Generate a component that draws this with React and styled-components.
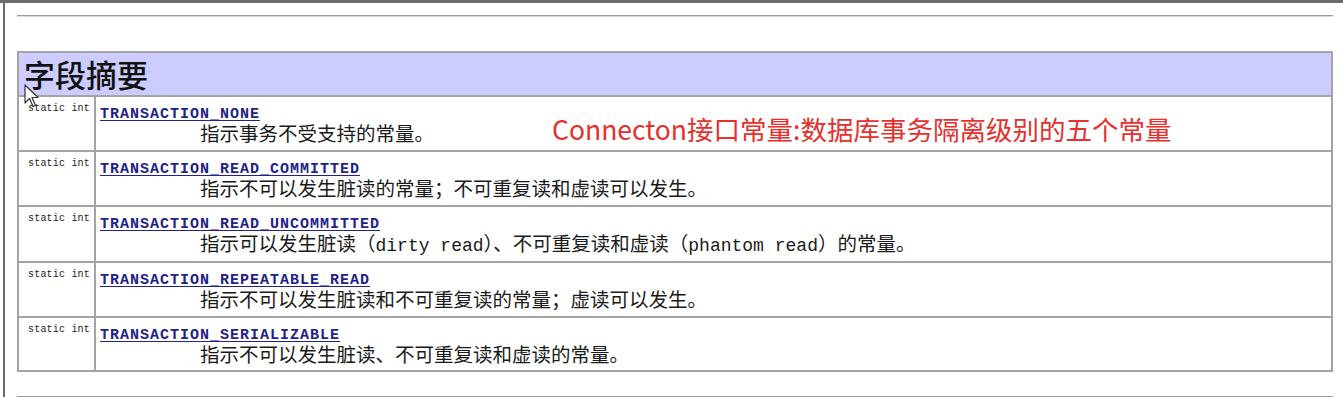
import React from 'react';
import styled, { createGlobalStyle } from 'styled-components';

const GlobalStyle = createGlobalStyle`
  html, body {
    margin: 0;
    padding: 0;
    background: #ffffff;
  }
  body {
    font-family: "Noto Sans CJK SC", "Liberation Sans", sans-serif;
    overflow: hidden;
  }
`;

const Frame = styled.div`
  border-top: 3px solid #6c6c6c;
  height: 394px;
  background: #ffffff;
`;

const Page = styled.div`
  margin-left: 3px;
  border-left: 2px solid #6c6c6c;
  height: 100%;
  padding: 12px 10px 0 12px;
  box-sizing: border-box;
`;

const Rule = styled.hr`
  margin: ${(p) => p.$top || 0}px 0 0 0;
  height: 0;
  border: none;
  border-top: 1px solid #9a9a9a;
  border-bottom: 1px solid #dcdcdc;
`;

const TableWrap = styled.div`
  position: relative;
  margin-top: 34px;
`;

const Summary = styled.table`
  width: 100%;
  border-collapse: collapse;
  border: 2px solid #a4a4a4;
`;

const HeadCell = styled.th`
  height: 42px;
  padding: 0 0 0 5px;
  background: #ccccff;
  border: 2px solid #a4a4a4;
  text-align: left;
  vertical-align: middle;
  font-family: "Noto Sans CJK SC", sans-serif;
  font-size: 31px;
  font-weight: 500;
  color: #111111;
  line-height: 42px;
`;

const Row = styled.tr`
  height: ${(p) => p.$h}px;
`;

const TypeCell = styled.td`
  width: 68px;
  padding: 4px 4px 0 3px;
  border: 2px solid #a4a4a4;
  vertical-align: top;
  text-align: right;
  font-family: "Liberation Mono", monospace;
  font-size: 10px;
  letter-spacing: 0.2px;
  line-height: 16px;
  color: #222222;
  white-space: nowrap;
`;

const NameCell = styled.td`
  padding: 2px 3px 0 4px;
  border: 2px solid #a4a4a4;
  vertical-align: top;
`;

const ConstLink = styled.a`
  display: inline-block;
  font-family: "Liberation Mono", monospace;
  font-weight: 700;
  font-size: 15px;
  letter-spacing: 1px;
  line-height: 20px;
  color: #22228a;
  text-decoration: underline;
  text-underline-offset: 2px;
`;

const Desc = styled.div`
  padding-left: 100px;
  font-family: "Liberation Mono", "Noto Sans CJK SC", monospace;
  font-size: 19.5px;
  line-height: 22px;
  color: #1a1a1a;
  white-space: nowrap;
`;

const Latin = styled.span`
  font-size: 18px;
`;

const Note = styled.div`
  position: absolute;
  left: 535px;
  top: 63px;
  font-family: "Noto Sans CJK SC", sans-serif;
  font-size: 26.5px;
  line-height: 30px;
  color: #e5302e;
  white-space: nowrap;
`;

const Pointer = styled.svg`
  position: absolute;
  left: 7px;
  top: 33px;
`;

const constants = [
  { name: 'TRANSACTION_NONE', desc: ['指示事务不受支持的常量。'], h: 55 },
  { name: 'TRANSACTION_READ_COMMITTED', desc: ['指示不可以发生脏读的常量；不可重复读和虚读可以发生。'], h: 55 },
  {
    name: 'TRANSACTION_READ_UNCOMMITTED',
    desc: ['指示可以发生脏读（', 'dirty read', '）、不可重复读和虚读（', 'phantom read', '）的常量。'],
    h: 56,
  },
  { name: 'TRANSACTION_REPEATABLE_READ', desc: ['指示不可以发生脏读和不可重复读的常量；虚读可以发生。'], h: 55 },
  { name: 'TRANSACTION_SERIALIZABLE', desc: ['指示不可以发生脏读、不可重复读和虚读的常量。'], h: 54 },
];

const App = () => {
  return (
    <>
      <GlobalStyle />
      <Frame>
        <Page>
          <Rule />
          <TableWrap>
            <Summary>
              <thead>
                <tr>
                  <HeadCell colSpan={2}>字段摘要</HeadCell>
                </tr>
              </thead>
              <tbody>
                {constants.map((c) => (
                  <Row key={c.name} $h={c.h}>
                    <TypeCell>static int</TypeCell>
                    <NameCell>
                      <ConstLink href="#">{c.name}</ConstLink>
                      <Desc>
                        {c.desc.map((part, i) =>
                          i % 2 === 1 ? <Latin key={i}>{part}</Latin> : <span key={i}>{part}</span>
                        )}
                      </Desc>
                    </NameCell>
                  </Row>
                ))}
              </tbody>
            </Summary>
            <Note>Connecton接口常量:数据库事务隔离级别的五个常量</Note>
            <Pointer width="17" height="25" viewBox="0 0 17 25">
              <path
                d="M1 1 L1 19 L5.5 14.5 L9 22.5 L11.5 21.5 L8 13.5 L14 13.5 Z"
                fill="#ffffff"
                stroke="#333333"
                strokeWidth="1.2"
                strokeLinejoin="round"
              />
            </Pointer>
          </TableWrap>
          <Rule $top={24} />
        </Page>
      </Frame>
    </>
  );
};

export default App;
